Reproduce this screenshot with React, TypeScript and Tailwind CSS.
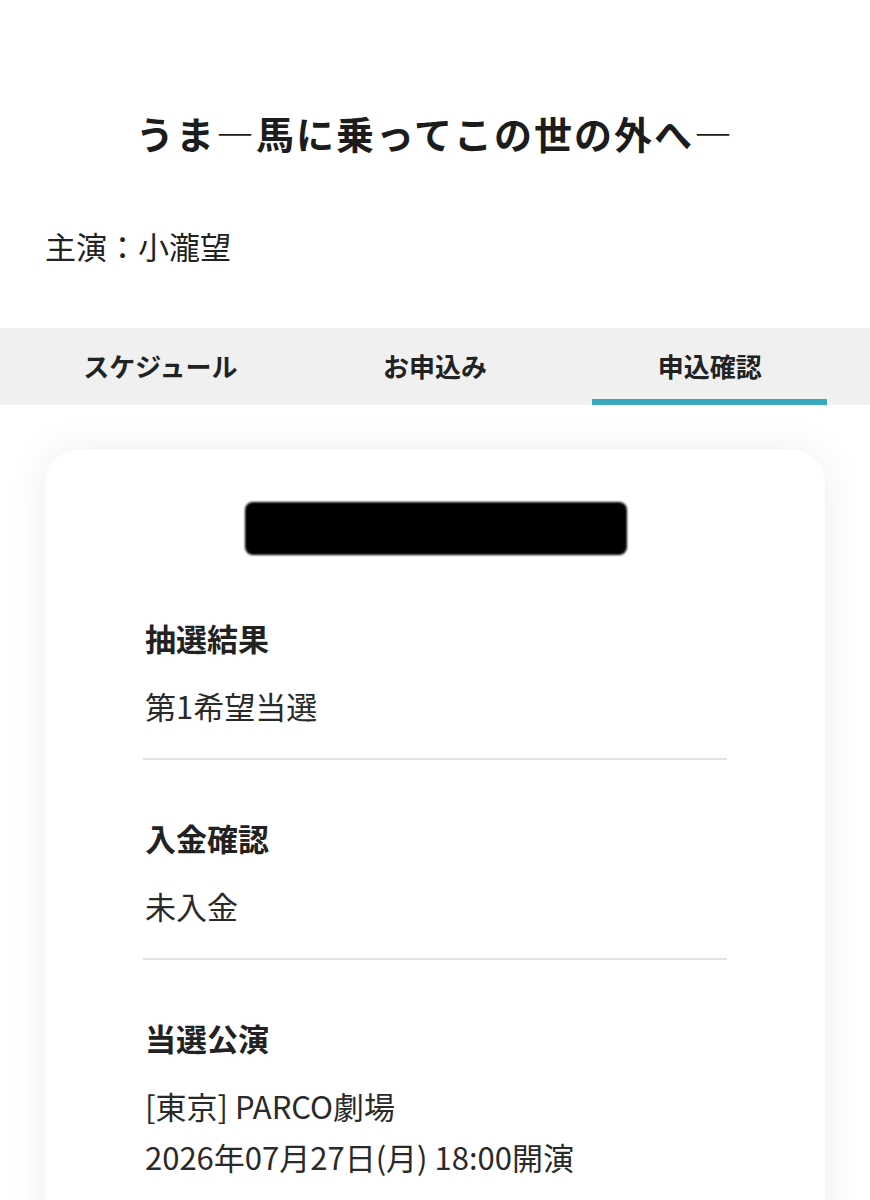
import React from "react";

const jp = { fontFamily: '"Noto Sans CJK JP", "Noto Sans", sans-serif' };

function Section({ title, lines, last }: { title: string; lines: string[]; last?: boolean }) {
  return (
    <div className={`pt-[57px] pb-[27px] ${last ? "" : "border-b-2 border-[#e3e3e3]"}`}>
      <div className="text-[31px] leading-[42px] font-bold text-[#222] ml-[2px]">{title}</div>
      <div className="mt-[21px] ml-[2px]">
        {lines.map((l) => (
          <div key={l} className="text-[31px] leading-[51px] text-[#2a2a2a]">
            {l}
          </div>
        ))}
      </div>
    </div>
  );
}

export default function App() {
  return (
    <div className="w-[870px] min-h-[1200px] bg-white" style={jp}>
      <div className="pt-[108px] text-center text-[38px] leading-[50px] font-bold tracking-[2px] text-[#1c1c1c]">
        うま―馬に乗ってこの世の外へ―
      </div>
      <div className="mt-[66px] pl-[45px] text-[31px] leading-[44px] text-[#222]">主演：小瀧望</div>
      <div className="mt-[60px] h-[77px] bg-[#f0f0f0] flex px-[23px]">
        {["スケジュール", "お申込み", "申込確認"].map((t, i) => (
          <div key={t} className="flex-1 flex flex-col">
            <div className="flex-1 flex items-center justify-center pt-[4px] text-[26px] font-bold text-[#222]">
              {t}
            </div>
            <div className={`h-[6px] mx-[20px] ${i === 2 ? "bg-[#3aa7c0]" : ""}`} />
          </div>
        ))}
      </div>
      <div className="pt-[45px] px-[45px] pb-[40px]">
        <div className="bg-white rounded-[32px] shadow-[0_0_40px_rgba(0,0,0,0.07)] px-[98px] pt-[52px] pb-[60px]">
          <div className="flex justify-center">
            <div className="w-[382px] h-[53px] bg-black rounded-[8px] blur-[1px] ml-[2px]" />
          </div>
          <div className="mt-[5px]">
            <Section title="抽選結果" lines={["第1希望当選"]} />
            <Section title="入金確認" lines={["未入金"]} />
            <Section title="当選公演" lines={["[東京] PARCO劇場", "2026年07月27日(月) 18:00開演"]} last />
          </div>
        </div>
      </div>
    </div>
  );
}
